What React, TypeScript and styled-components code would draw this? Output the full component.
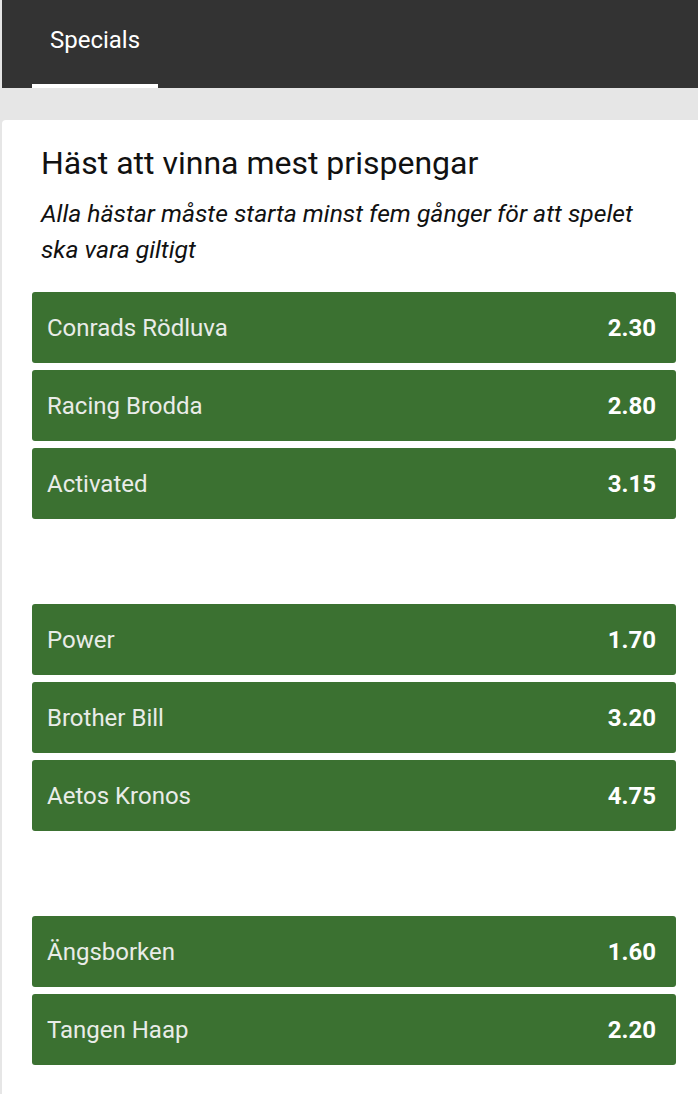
import styled, { createGlobalStyle } from 'styled-components'

const GlobalStyle = createGlobalStyle`
  html, body {
    margin: 0;
    padding: 0;
    background: #e6e6e6;
    font-family: Roboto, "Liberation Sans", Arial, sans-serif;
  }
`;

const Page = styled.div`
  min-height: 100vh;
  padding-left: 2px;
  background: #e6e6e6;
`;

const TabBar = styled.nav`
  display: flex;
  height: 88px;
  padding-left: 30px;
  background: #333333;
`;

const Tab = styled.div<{ $active?: boolean }>`
  display: flex;
  align-items: flex-start;
  justify-content: center;
  width: 126px;
  padding-top: 25px;
  box-sizing: border-box;
  color: #ffffff;
  font-size: 24px;
  line-height: 30px;
  border-bottom: 4px solid ${({ $active }) => ($active ? '#ffffff' : 'transparent')};
`;

const Card = styled.section`
  margin-top: 32px;
  padding: 26px 22px 40px 30px;
  background: #ffffff;
  border-top-left-radius: 4px;
  min-height: 940px;
`;

const Title = styled.h1`
  margin: 0 0 0 9px;
  font-size: 32px;
  font-weight: 400;
  line-height: 34px;
  color: #111111;
`;

const Note = styled.p`
  margin: 16px 0 24px 9px;
  font-size: 24.7px;
  font-style: italic;
  line-height: 36px;
  color: #111111;
`;

const Group = styled.div`
  display: flex;
  flex-direction: column;
  gap: 7px;
  & + & {
    margin-top: 85px;
  }
`;

const OddsButton = styled.button`
  display: flex;
  align-items: center;
  justify-content: space-between;
  height: 71px;
  padding: 0 20px 0 15px;
  border: none;
  border-radius: 3px;
  background: #3b7131;
  font-family: inherit;
  cursor: pointer;
`;

const Runner = styled.span`
  font-size: 24px;
  color: #e9ece8;
`;

const Price = styled.span`
  font-size: 24px;
  font-weight: 700;
  color: #ffffff;
`;

const groups: [string, string][][] = [
  [
    ['Conrads Rödluva', '2.30'],
    ['Racing Brodda', '2.80'],
    ['Activated', '3.15'],
  ],
  [
    ['Power', '1.70'],
    ['Brother Bill', '3.20'],
    ['Aetos Kronos', '4.75'],
  ],
  [
    ['Ängsborken', '1.60'],
    ['Tangen Haap', '2.20'],
  ],
]

export default function App() {
  return (
    <>
      <GlobalStyle />
      <Page>
        <TabBar>
          <Tab $active>Specials</Tab>
        </TabBar>
        <Card>
          <Title>Häst att vinna mest prispengar</Title>
          <Note>Alla hästar måste starta minst fem gånger för att spelet ska vara giltigt</Note>
          {groups.map((rows, i) => (
            <Group key={i}>
              {rows.map(([name, odds]) => (
                <OddsButton key={name}>
                  <Runner>{name}</Runner>
                  <Price>{odds}</Price>
                </OddsButton>
              ))}
            </Group>
          ))}
        </Card>
      </Page>
    </>
  )
}
